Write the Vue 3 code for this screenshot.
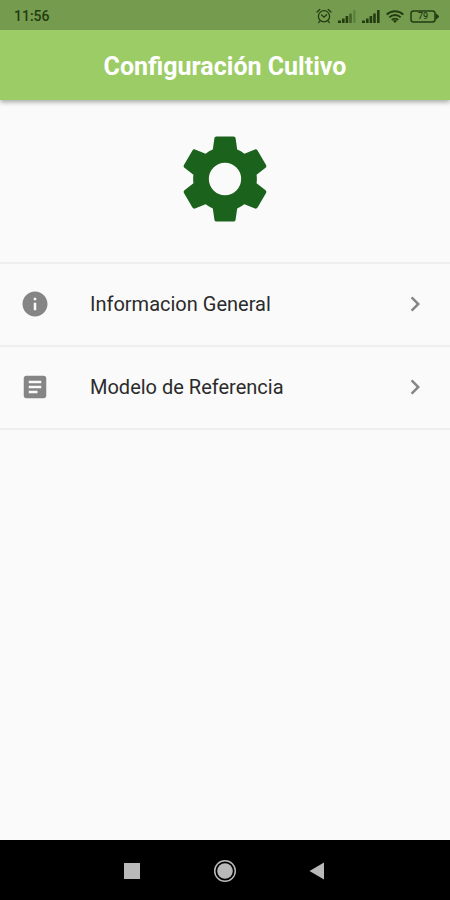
<script setup>
const items = [
  {
    label: 'Informacion General',
    icon: 'M12 2C6.48 2 2 6.48 2 12s4.48 10 10 10 10-4.48 10-10S17.52 2 12 2zm1 15h-2v-6h2v6zm0-8h-2V7h2v2z',
  },
  {
    label: 'Modelo de Referencia',
    icon: 'M19 3H5c-1.1 0-2 .9-2 2v14c0 1.1.9 2 2 2h14c1.1 0 2-.9 2-2V5c0-1.1-.9-2-2-2zm-5 14H7v-2h7v2zm3-4H7v-2h10v2zm0-4H7V7h10v2z',
  },
]
</script>

<template>
  <div class="screen">
    <div class="status">
      <span class="time">11:56</span>
      <div class="indicators">
        <svg class="alarm" viewBox="0 0 16 16" fill="none" stroke="currentColor" stroke-width="1.3" stroke-linecap="round">
          <circle cx="8" cy="8.3" r="5.6" />
          <path d="M1 4 3.8 1.4M15 4l-2.8-2.6M3.8 13.2 2.6 14.6M12.2 13.2l1.2 1.4M5.6 7 8 9.2 10.6 6.8" />
        </svg>
        <svg class="signal" viewBox="0 0 18 13" fill="currentColor">
          <path d="M0 10.500h3V13H0zM4 8.500h2.600V13H4zM7.600 6h2.600v7H7.600z" />
          <path opacity=".6" d="M11.200 3.500h2.600V13h-2.600z" />
          <path opacity=".25" d="M15 0h2.600v13H15z" />
        </svg>
        <svg class="signal" viewBox="0 0 18 13" fill="currentColor">
          <path d="M0 10.500h3V13H0zM4 8.500h2.600V13H4zM7.600 6h2.600v7H7.600zM11.200 3.500h2.600V13h-2.600zM15 0h2.600v13H15z" />
        </svg>
        <svg class="wifi" viewBox="0 0 18 13" fill="none" stroke="currentColor" stroke-width="2">
          <path d="M.7 4.600a12 12 0 0 1 16.600 0M3.300 7.400a8.200 8.200 0 0 1 11.400 0M5.800 10a4.600 4.600 0 0 1 6.400 0" />
          <path fill="currentColor" stroke="none" d="M9 13 7 10.900a3 3 0 0 1 4 0z" />
        </svg>
        <div class="battery">
          <span class="level">79</span>
          <svg class="shell" viewBox="0 0 29 13" fill="none" stroke="currentColor" stroke-width="1.500">
            <rect x="1" y="1" width="24" height="11" rx="2.500" />
            <path fill="currentColor" stroke="none" d="M25.500 3 29 6v1l-3.500 3z" />
          </svg>
        </div>
      </div>
    </div>

    <header class="appbar">
      <h1>Configuración Cultivo</h1>
    </header>

    <main>
      <div class="hero">
        <svg viewBox="0 0 24 24" fill="currentColor" aria-hidden="true">
          <path fill-rule="evenodd" d="M19.43 12.98c.04-.32.07-.64.07-.98s-.03-.66-.07-.98l2.11-1.65c.19-.15.24-.42.12-.64l-2-3.46c-.12-.22-.39-.3-.61-.22l-2.49 1c-.52-.4-1.08-.73-1.69-.98l-.38-2.65C14.46 2.18 14.25 2 14 2h-4c-.25 0-.46.18-.49.42l-.38 2.65c-.61.25-1.17.59-1.69.98l-2.49-1c-.23-.09-.49 0-.61.22l-2 3.46c-.13.22-.07.49.12.64l2.11 1.65c-.04.32-.07.65-.07.98s.03.66.07.98l-2.11 1.65c-.19.15-.24.42-.12.64l2 3.46c.12.22.39.3.61.22l2.49-1c.52.4 1.08.73 1.69.98l.38 2.65c.03.24.24.42.49.42h4c.25 0 .46-.18.49-.42l.38-2.65c.61-.25 1.17-.59 1.69-.98l2.49 1c.23.09.49 0 .61-.22l2-3.46c.12-.22.07-.49-.12-.64l-2.11-1.65zM12 15.8a3.8 3.8 0 1 1 0-7.6 3.8 3.8 0 0 1 0 7.6z" />
        </svg>
      </div>
      <ul class="list">
        <li v-for="item in items" :key="item.label">
          <button type="button" class="row">
            <svg class="icon" viewBox="0 0 24 24" fill="currentColor" aria-hidden="true"><path :d="item.icon" /></svg>
            <span class="label">{{ item.label }}</span>
            <svg class="chevron" viewBox="0 0 24 24" fill="currentColor" aria-hidden="true">
              <path d="M10 6 8.59 7.41 13.17 12l-4.58 4.59L10 18l6-6z" />
            </svg>
          </button>
        </li>
      </ul>
    </main>

    <nav class="navbar">
      <button type="button" aria-label="Recientes">
        <svg viewBox="0 0 24 24" fill="currentColor"><rect x="4" y="4" width="16" height="16" /></svg>
      </button>
      <button type="button" aria-label="Inicio">
        <svg viewBox="0 0 24 24"><circle cx="12" cy="12" r="10.3" fill="none" stroke="currentColor" stroke-width="1.5" /><circle cx="12" cy="12" r="7.8" fill="currentColor" /></svg>
      </button>
      <button type="button" aria-label="Atrás">
        <svg viewBox="0 0 24 24" fill="currentColor"><path d="M3.500 12 18 3.500v17z" /></svg>
      </button>
    </nav>
  </div>
</template>

<style>
body {
  margin: 0;
  background: #fafafa;
}
</style>

<style scoped>
.screen {
  display: flex;
  flex-direction: column;
  min-height: 100vh;
  background: #fafafa;
  font-family: Roboto, "Liberation Sans", sans-serif;
}
svg {
  display: block;
}
button {
  border: 0;
  padding: 0;
  background: none;
  color: inherit;
  font: inherit;
  cursor: pointer;
}
.status {
  position: relative;
  z-index: 1;
  display: flex;
  align-items: center;
  justify-content: space-between;
  box-sizing: border-box;
  height: 30px;
  padding: 2px 11px 0 14px;
  background: #759b4f;
  color: #233c10;
}
.time {
  font-size: 14px;
  font-weight: 500;
  line-height: 16px;
}
.indicators {
  display: flex;
  align-items: center;
  gap: 6px;
}
.alarm {
  width: 16px;
  height: 16px;
}
.signal,
.wifi {
  width: 18px;
  height: 13px;
}
.battery {
  display: grid;
  width: 29px;
  height: 13px;
}
.level,
.shell {
  grid-area: 1 / 1;
}
.level {
  padding-right: 3px;
  font-size: 9px;
  font-weight: 500;
  line-height: 13px;
  text-align: center;
}
.appbar {
  display: flex;
  align-items: center;
  justify-content: center;
  box-sizing: border-box;
  height: 70px;
  padding-top: 4px;
  background: #9ccc65;
  box-shadow: 0 2px 5px rgba(0, 0, 0, 0.35);
  color: #fff;
}
h1 {
  margin: 0;
  font-size: 25px;
  font-weight: 700;
  line-height: 32px;
}
main {
  flex: 1;
}
.hero {
  display: flex;
  justify-content: center;
  padding: 28px 0 32px;
  color: #1b631d;
}
.hero svg {
  width: 102px;
  height: 102px;
}
.list {
  margin: 0;
  padding: 0;
  list-style: none;
  border-top: 2px solid #eee;
}
.row {
  display: flex;
  align-items: center;
  box-sizing: border-box;
  width: 100%;
  height: 83px;
  padding: 0 20px 2px;
  border-bottom: 2px solid #eee;
  color: #858585;
  text-align: left;
}
.icon,
.chevron {
  width: 30px;
  height: 30px;
}
.label {
  flex: 1;
  padding-left: 40px;
  color: #2b2b2b;
  font-size: 20px;
  line-height: 24px;
}
.navbar {
  display: flex;
  align-items: center;
  justify-content: center;
  gap: 69px;
  box-sizing: border-box;
  height: 60px;
  padding-top: 2px;
  background: #000;
  color: #b9b9b9;
}
.navbar svg {
  width: 24px;
  height: 24px;
}
</style>
